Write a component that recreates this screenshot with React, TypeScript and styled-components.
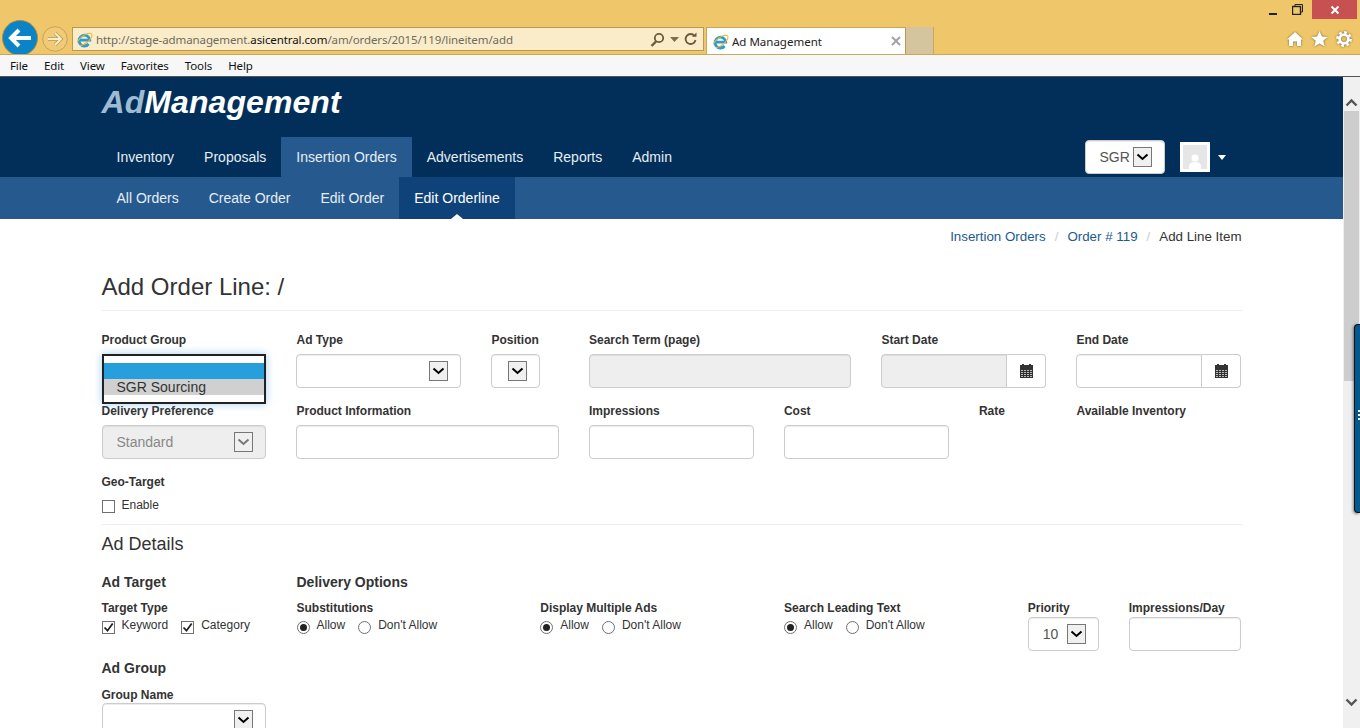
import React from "react";
import styled, { createGlobalStyle } from "styled-components";

const GlobalStyle = createGlobalStyle`
  html, body {
    margin: 0;
    height: 728px;
    overflow: hidden;
    background: #fff;
    font-family: "Liberation Sans", Arial, sans-serif;
    color: #333;
  }
  * { box-sizing: border-box; }
`;

/* ---------- browser chrome ---------- */

const Chrome = styled.div`
  height: 55px;
  background: #efc669;
  border-bottom: 1px solid #c9a85a;
  overflow: hidden;
`;

const TitleRow = styled.div`
  height: 27px;
  display: flex;
  justify-content: flex-end;
  align-items: flex-start;
  padding-right: 3px;
`;

const WindowButton = styled.div<{ $close?: boolean }>`
  width: ${(p) => (p.$close ? "45px" : "25px")};
  height: 19px;
  margin-left: ${(p) => (p.$close ? "2px" : "0")};
  display: flex;
  align-items: center;
  justify-content: center;
  background: ${(p) => (p.$close ? "#c75050" : "transparent")};
`;

const ToolRow = styled.div`
  height: 27px;
  display: flex;
  align-items: flex-start;
  padding-left: 2px;
`;

const RoundButton = styled.div`
  flex: none;
  width: 36px;
  height: 36px;
  margin-top: -7px;
`;

const ForwardButton = styled.div`
  flex: none;
  width: 26px;
  height: 26px;
  margin: -1px 0 0 4px;
`;

const AddressBar = styled.div`
  flex: none;
  width: 632px;
  height: 24px;
  margin-left: 4px;
  padding: 0 6px 0 3px;
  display: flex;
  align-items: center;
  background: #faecc9;
  border: 1px solid #b89a52;
`;

const AddressText = styled.div`
  flex: 1;
  margin-left: 3px;
  padding-top: 1px;
  font: 11.5px/22px "Noto Sans", sans-serif;
  letter-spacing: -0.1px;
  color: #6f6a5c;
  white-space: nowrap;
  strong {
    font-weight: 400;
    color: #111;
  }
`;

const AddressTools = styled.div`
  display: flex;
  align-items: center;
  gap: 5px;
`;

const BrowserTab = styled.div`
  flex: none;
  width: 200px;
  height: 27px;
  margin-left: 2px;
  padding: 0 4px 0 5px;
  display: flex;
  align-items: center;
  background: #fff;
  border: 1px solid #c9a85a;
  border-bottom: none;
  border-right-color: #b89a52;
`;

const TabTitle = styled.div`
  flex: 1;
  margin-left: 3px;
  padding-top: 1px;
  font: 11.5px/22px "Noto Sans", sans-serif;
  color: #222;
`;

const NewTab = styled.div`
  flex: none;
  width: 28px;
  height: 27px;
  background: #d5c59e;
  border-right: 1px solid #c9a85a;
`;

const ToolIcons = styled.div`
  margin-left: auto;
  padding: 4px 8px 0 0;
  display: flex;
  gap: 8px;
  filter: drop-shadow(0 0 1px #6e5f3a);
`;

const MenuBar = styled.div`
  height: 22px;
  padding-left: 10px;
  display: flex;
  align-items: center;
  gap: 16px;
  background: #f7f7f7;
  border-bottom: 1px solid #555;
  font: 11.5px/20px "Noto Sans", sans-serif;
  letter-spacing: -0.12px;
  color: #111;
`;

/* ---------- viewport + scrollbar ---------- */

const Viewport = styled.div`
  position: relative;
  height: 651px;
  display: flex;
  overflow: hidden;
`;

const Page = styled.main`
  flex: 1;
  min-width: 0;
  overflow: hidden;
`;

const Scrollbar = styled.div`
  flex: none;
  width: 17px;
  display: flex;
  flex-direction: column;
  align-items: center;
  background: #f0f0f0;
  padding: 16px 0 0;
`;

const ScrollArrow = styled.div`
  height: 18px;
  flex: none;
`;

const ScrollThumb = styled.div`
  width: 15px;
  height: 270px;
  flex: none;
  background: #cdcdcd;
`;

const ScrollDown = styled.div`
  margin-top: auto;
  margin-bottom: 17px;
`;

const SideHandle = styled.div`
  position: absolute;
  top: 247px;
  right: 0;
  width: 6px;
  height: 189px;
  display: flex;
  flex-direction: column;
  justify-content: center;
  align-items: flex-end;
  gap: 2px;
  padding-bottom: 8px;
  background: #005a8f;
  border: 1px solid #111;
  border-right: none;
  border-radius: 4px 0 0 4px;
  box-shadow: -1px 1px 3px rgba(0, 0, 0, 0.45);
  span {
    width: 2px;
    height: 2px;
    background: #fff;
  }
`;

/* ---------- site header ---------- */

const Header = styled.header`
  background: #012f5a;
`;

const Container = styled.div`
  width: 1170px;
  margin: 0 auto;
`;

const LogoRow = styled.div`
  height: 60px;
  padding: 5px 15px 0;
`;

const Logo = styled.div`
  font: italic 700 32px/40px "Liberation Sans", Arial, sans-serif;
  letter-spacing: 0.08px;
  color: #fff;
  span {
    color: #9dbcd3;
  }
`;

const MainNavRow = styled.div`
  display: flex;
  align-items: center;
  justify-content: space-between;
  padding: 0 31px 0 15px;
`;

const NavList = styled.nav`
  display: flex;
`;

const NavItem = styled.a<{ $active?: boolean }>`
  padding: 0 15px;
  font-size: 14px;
  line-height: 40px;
  color: #e6edf3;
  background: ${(p) => (p.$active ? "#265a8f" : "transparent")};
`;

const UserArea = styled.div`
  display: flex;
  align-items: center;
`;

const Avatar = styled.div`
  width: 30px;
  height: 30px;
  margin-left: 15px;
  background: #e6e6e6;
  border: 3px solid #fff;
`;

const Caret = styled.div`
  margin-left: 8px;
  width: 0;
  height: 0;
  border-left: 4.5px solid transparent;
  border-right: 4.5px solid transparent;
  border-top: 5px solid #fff;
`;

const SubNavBar = styled.div`
  background: #265a8f;
`;

const SubNavList = styled.nav`
  display: flex;
  padding-left: 15px;
`;

const SubNavItem = styled.a<{ $active?: boolean }>`
  position: relative;
  padding: 0 15px;
  font-size: 14px;
  line-height: 42px;
  color: ${(p) => (p.$active ? "#fff" : "#e6edf3")};
  background: ${(p) => (p.$active ? "#10427a" : "transparent")};
  ${(p) =>
    p.$active &&
    `&::after {
      content: "";
      position: absolute;
      left: 50%;
      bottom: 0;
      margin-left: -6px;
      border-left: 6px solid transparent;
      border-right: 6px solid transparent;
      border-bottom: 5px solid #fff;
    }`}
`;

/* ---------- page body ---------- */

const Breadcrumb = styled.div`
  height: 20px;
  margin-top: 8px;
  padding-right: 15px;
  display: flex;
  justify-content: flex-end;
  font-size: 13.33px;
  line-height: 20px;
  a {
    color: #1b5a8f;
  }
  i {
    font-style: normal;
    color: #ccc;
    padding: 0 9px;
  }
`;

const PageTitle = styled.h1`
  margin: 27px 15px 19px;
  padding-bottom: 10px;
  border-bottom: 1px solid #eee;
  font-size: 24px;
  font-weight: 400;
  line-height: 26px;
  color: #333;
`;

const FormRow = styled.div`
  width: 1169.9px;
  display: grid;
  grid-template-columns: repeat(12, 1fr);
`;

const Col = styled.div<{ $span: number; $flush?: boolean }>`
  grid-column: span ${(p) => p.$span};
  padding: 0 15px ${(p) => (p.$flush ? "0" : "13px")};
`;

const Label = styled.label<{ $tight?: boolean }>`
  display: block;
  margin-bottom: ${(p) => (p.$tight ? "1px" : "4px")};
  font-size: 12px;
  font-weight: 700;
  line-height: ${(p) => (p.$tight ? "16px" : "20px")};
  color: #333;
  white-space: nowrap;
`;

const TextInput = styled.input`
  display: block;
  width: 100%;
  height: 34px;
  padding: 0 12px;
  border: 1px solid #ccc;
  border-radius: 4px;
  background: #fff;
  box-shadow: inset 0 1px 1px rgba(0, 0, 0, 0.075);
  &:disabled {
    background: #eee;
  }
`;

const InputGroup = styled.div`
  display: flex;
  ${TextInput} {
    flex: 1;
    min-width: 0;
    border-radius: 4px 0 0 4px;
  }
`;

const Addon = styled.div`
  flex: none;
  width: 39px;
  height: 34px;
  display: flex;
  align-items: center;
  justify-content: center;
  border: 1px solid #ccc;
  border-left: none;
  border-radius: 0 4px 4px 0;
  background: #fff;
`;

const SelectBox = styled.div<{ $width?: number; $disabled?: boolean }>`
  position: relative;
  width: ${(p) => (p.$width ? `${p.$width}px` : "100%")};
  height: 34px;
  padding: 0 12px 0 14px;
  display: flex;
  align-items: center;
  justify-content: space-between;
  border: 1px solid #ccc;
  border-radius: 4px;
  background: ${(p) => (p.$disabled ? "#eee" : "#fff")};
  box-shadow: inset 0 1px 1px rgba(0, 0, 0, 0.075);
  font-size: 14px;
  color: ${(p) => (p.$disabled ? "#888" : "#555")};
`;

const ArrowBox = styled.span<{ $muted?: boolean }>`
  flex: none;
  width: 19px;
  height: 20px;
  margin-left: auto;
  display: flex;
  align-items: center;
  justify-content: center;
  background: #f0f0f0;
  border: 1px solid #777;
  color: ${(p) => (p.$muted ? "#777" : "#000")};
`;

const OpenList = styled.div`
  position: absolute;
  top: -1px;
  left: -1px;
  right: -1px;
  z-index: 2;
  padding: 7px 0;
  background: #fff;
  border: 2px solid #222;
  box-shadow: 0 0 8px rgba(102, 175, 233, 0.6);
`;

const OpenOption = styled.div<{ $selected?: boolean }>`
  height: 16px;
  padding-left: 13px;
  font-size: 14px;
  line-height: 16px;
  color: #333;
  background: ${(p) => (p.$selected ? "#269fdc" : "#d0d0d0")};
`;

const CheckRow = styled.div`
  display: flex;
  gap: 7px;
  font-size: 12px;
  line-height: 16px;
  color: #333;
`;

const EnableRow = styled(CheckRow)`
  line-height: 18px;
`;

const OptionRow = styled(CheckRow)`
  margin-top: 1px;
`;

const CheckItem = styled.span`
  display: flex;
  margin-right: 6px;
  gap: 7px;
`;

const BoxMark = styled.span`
  flex: none;
  width: 13px;
  height: 13px;
  margin-top: 4px;
  display: flex;
  align-items: center;
  justify-content: center;
  background: #fff;
  border: 1px solid #707070;
`;

const RadioMark = styled(BoxMark)`
  border-radius: 50%;
`;

const RadioDot = styled.span`
  width: 7px;
  height: 7px;
  border-radius: 50%;
  background: #222;
`;

const Divider = styled.hr`
  margin: 10px 15px 9px;
  border: none;
  border-top: 1px solid #eee;
`;

const SectionTitle = styled.h2`
  margin: 0 15px 18px;
  font-size: 18px;
  font-weight: 400;
  line-height: 20px;
  color: #333;
`;

const DetailsGrid = styled.div`
  display: grid;
  grid-template-columns: 195px 975px;
`;

const TargetCol = styled.div`
  padding: 0 15.5px 0 15px;
`;

const DeliveryCol = styled.div`
  padding: 0 15px;
`;

const DetailsHeading = styled.h3<{ $spaced?: boolean }>`
  margin: ${(p) => (p.$spaced ? "24px" : "0")} 0 8px;
  font-size: 14px;
  font-weight: 700;
  line-height: 20px;
  color: #333;
`;

const DeliveryGrid = styled.div`
  display: grid;
  grid-template-columns: 243.75px 243.75px 243.75px 101px 1fr;
  margin-right: -15px;
`;

const OptionGroup = styled.div``;

const GroupField = styled.div`
  margin-top: 9px;
  ${Label} {
    margin-bottom: 0;
  }
`;

const ImpressionsCol = styled.div`
  padding-right: 15.5px;
`;

/* ---------- drawings ---------- */

const IeIcon = () => (
  <svg width="17" height="17" viewBox="0 0 17 17">
    <path d="M3.6 9.2h10.2A5.4 5.4 0 1 0 12.6 13" fill="none" stroke="#2c9bd9" strokeWidth="2.8" />
    <ellipse cx="8.5" cy="8.5" rx="9" ry="3.8" transform="rotate(-38 8.5 8.5)" fill="none" stroke="#f0b428" strokeWidth="1" strokeDasharray="18 6 30" />
  </svg>
);

const Chevron = () => (
  <svg width="13" height="8" viewBox="0 0 13 8">
    <path d="M1.5 1.5l5 4.5 5-4.5" fill="none" stroke="currentColor" strokeWidth="2" />
  </svg>
);

const Arrow = ({ muted }: { muted?: boolean }) => (
  <ArrowBox $muted={muted}>
    <Chevron />
  </ArrowBox>
);

const CalendarIcon = () => (
  <svg width="13" height="14" viewBox="0 0 13 14">
    <rect x="0" y="1" width="13" height="13" fill="#333" />
    <rect x="2" y="0" width="2" height="2" fill="#333" />
    <rect x="9" y="0" width="2" height="2" fill="#333" />
    <path d="M1 6.5h11M1 8.5h11M1 10.5h11M1 12.5h11" stroke="#bbb" strokeWidth="1" strokeDasharray="2 1" />
  </svg>
);

const Check = ({ label, checked }: { label: string; checked?: boolean }) => (
  <CheckItem>
    <BoxMark>
      {checked && (
        <svg width="11" height="11" viewBox="0 0 11 11">
          <path d="M1.5 5.5l3 3.2L9.7 1.5" fill="none" stroke="#222" strokeWidth="1.8" />
        </svg>
      )}
    </BoxMark>
    {label}
  </CheckItem>
);

const Radio = ({ label, checked }: { label: string; checked?: boolean }) => (
  <CheckItem>
    <RadioMark>{checked && <RadioDot />}</RadioMark>
    {label}
  </CheckItem>
);

const AllowOptions = () => (
  <OptionRow>
    <Radio label="Allow" checked />
    <Radio label="Don't Allow" />
  </OptionRow>
);

const AvatarFigure = () => (
  <svg width="24" height="24" viewBox="0 0 24 24">
    <circle cx="12" cy="13" r="3.5" fill="#fff" />
    <path d="M6 24v-3c0-2.5 3-4 6-4s6 1.5 6 4v3z" fill="#fff" />
  </svg>
);

const navItems = ["Inventory", "Proposals", "Insertion Orders", "Advertisements", "Reports", "Admin"];
const subNavItems = ["All Orders", "Create Order", "Edit Order", "Edit Orderline"];
const menuItems = ["File", "Edit", "View", "Favorites", "Tools", "Help"];

export default function App() {
  return (
    <>
      <GlobalStyle />
      <Chrome>
        <TitleRow>
          <WindowButton>
            <svg width="10" height="10" viewBox="0 0 10 10">
              <rect x="1" y="8" width="8" height="2" fill="#222" />
            </svg>
          </WindowButton>
          <WindowButton>
            <svg width="11" height="11" viewBox="0 0 11 11" fill="none" stroke="#222">
              <rect x="0.5" y="2.5" width="8" height="8" strokeWidth="1.4" />
              <path d="M3 2V0.5h7.5V8H9" />
            </svg>
          </WindowButton>
          <WindowButton $close>
            <svg width="10" height="10" viewBox="0 0 10 10">
              <path d="M1.5 1.5l7 7M8.5 1.5l-7 7" stroke="#fff" strokeWidth="2" />
            </svg>
          </WindowButton>
        </TitleRow>
        <ToolRow>
          <RoundButton>
            <svg width="36" height="36" viewBox="0 0 36 36">
              <circle cx="18" cy="18" r="17.5" fill="#0a84c6" stroke="#a88a40" strokeWidth="1" />
              <path d="M29 18H10M17 10l-8 8 8 8" fill="none" stroke="#fff" strokeWidth="4" />
            </svg>
          </RoundButton>
          <ForwardButton>
            <svg width="26" height="26" viewBox="0 0 26 26">
              <circle cx="13" cy="13" r="12.3" fill="#f0ca75" stroke="#c4a458" strokeWidth="1" />
              <path d="M6 13h12M13 7l6 6-6 6" fill="none" stroke="#b99c58" strokeWidth="3.4" />
              <path d="M6 13h12M13 7l6 6-6 6" fill="none" stroke="#fbeec8" strokeWidth="1.8" />
            </svg>
          </ForwardButton>
          <AddressBar>
            <IeIcon />
            <AddressText>
              http://stage-admanagement.<strong>asicentral.com</strong>/am/orders/2015/119/lineitem/add
            </AddressText>
            <AddressTools>
              <svg width="15" height="15" viewBox="0 0 15 15" fill="none" stroke="#6b5b37">
                <circle cx="9" cy="6" r="4.2" strokeWidth="1.8" />
                <path d="M6 9.5L1.5 14" strokeWidth="2.4" />
              </svg>
              <svg width="9" height="5" viewBox="0 0 9 5">
                <path d="M0 0h9L4.5 5z" fill="#7d6e4a" />
              </svg>
              <svg width="13" height="14" viewBox="0 0 13 14" fill="none">
                <path d="M10.6 4A5 5 0 1 0 11.5 8" stroke="#6b5b37" strokeWidth="1.8" />
                <path d="M8 4.8h4.5V0.5z" fill="#6b5b37" />
              </svg>
            </AddressTools>
          </AddressBar>
          <BrowserTab>
            <IeIcon />
            <TabTitle>Ad Management</TabTitle>
            <svg width="10" height="10" viewBox="0 0 10 10">
              <path d="M1 1l8 8M9 1l-8 8" stroke="#a3a3a3" strokeWidth="2" />
            </svg>
          </BrowserTab>
          <NewTab />
          <ToolIcons>
            <svg width="16" height="16" viewBox="0 0 16 16">
              <path d="M8 1l8 7.5h-2V15h-4v-4.5H6V15H2V8.5H0z" fill="#fff" />
            </svg>
            <svg width="17" height="16" viewBox="0 0 17 16">
              <path d="M8.5 0l2.4 5.4 5.8.6-4.4 3.8 1.3 5.8-5.1-3-5.1 3 1.3-5.8L.3 6l5.8-.6z" fill="#fff" />
            </svg>
            <svg width="16" height="16" viewBox="0 0 16 16" fill="none" stroke="#fff">
              <circle cx="8" cy="8" r="4.4" strokeWidth="2.8" />
              <circle cx="8" cy="8" r="6.6" strokeWidth="2.6" strokeDasharray="2.6 2.58" />
            </svg>
          </ToolIcons>
        </ToolRow>
      </Chrome>
      <MenuBar>
        {menuItems.map((item) => (
          <span key={item}>{item}</span>
        ))}
      </MenuBar>

      <Viewport>
        <Page>
          <Header>
            <Container>
              <LogoRow>
                <Logo>
                  <span>Ad</span>Management
                </Logo>
              </LogoRow>
              <MainNavRow>
                <NavList>
                  {navItems.map((item) => (
                    <NavItem key={item} $active={item === "Insertion Orders"}>
                      {item}
                    </NavItem>
                  ))}
                </NavList>
                <UserArea>
                  <SelectBox $width={80}>
                    SGR
                    <Arrow />
                  </SelectBox>
                  <Avatar>
                    <AvatarFigure />
                  </Avatar>
                  <Caret />
                </UserArea>
              </MainNavRow>
            </Container>
          </Header>
          <SubNavBar>
            <Container>
              <SubNavList>
                {subNavItems.map((item) => (
                  <SubNavItem key={item} $active={item === "Edit Orderline"}>
                    {item}
                  </SubNavItem>
                ))}
              </SubNavList>
            </Container>
          </SubNavBar>

          <Container>
            <Breadcrumb>
              <a>Insertion Orders</a>
              <i>/</i>
              <a>Order # 119</a>
              <i>/</i>
              <span>Add Line Item</span>
            </Breadcrumb>
            <PageTitle>Add Order Line: /</PageTitle>

            <FormRow>
              <Col $span={2}>
                <Label>Product Group</Label>
                <SelectBox>
                  <OpenList>
                    <OpenOption $selected />
                    <OpenOption>SGR Sourcing</OpenOption>
                  </OpenList>
                </SelectBox>
              </Col>
              <Col $span={2}>
                <Label>Ad Type</Label>
                <SelectBox>
                  <Arrow />
                </SelectBox>
              </Col>
              <Col $span={1}>
                <Label>Position</Label>
                <SelectBox $width={49}>
                  <Arrow />
                </SelectBox>
              </Col>
              <Col $span={3}>
                <Label>Search Term (page)</Label>
                <TextInput disabled />
              </Col>
              <Col $span={2}>
                <Label>Start Date</Label>
                <InputGroup>
                  <TextInput disabled />
                  <Addon>
                    <CalendarIcon />
                  </Addon>
                </InputGroup>
              </Col>
              <Col $span={2}>
                <Label>End Date</Label>
                <InputGroup>
                  <TextInput />
                  <Addon>
                    <CalendarIcon />
                  </Addon>
                </InputGroup>
              </Col>

              <Col $span={2}>
                <Label>Delivery Preference</Label>
                <SelectBox $disabled>
                  Standard
                  <Arrow muted />
                </SelectBox>
              </Col>
              <Col $span={3}>
                <Label>Product Information</Label>
                <TextInput />
              </Col>
              <Col $span={2}>
                <Label>Impressions</Label>
                <TextInput />
              </Col>
              <Col $span={2}>
                <Label>Cost</Label>
                <TextInput />
              </Col>
              <Col $span={1}>
                <Label>Rate</Label>
              </Col>
              <Col $span={2}>
                <Label>Available Inventory</Label>
              </Col>

              <Col $span={12} $flush>
                <Label>Geo-Target</Label>
                <EnableRow>
                  <Check label="Enable" />
                </EnableRow>
              </Col>
            </FormRow>
            <Divider />

            <SectionTitle>Ad Details</SectionTitle>
            <DetailsGrid>
              <TargetCol>
                <DetailsHeading>Ad Target</DetailsHeading>
                <Label $tight>Target Type</Label>
                <OptionRow>
                  <Check label="Keyword" checked />
                  <Check label="Category" checked />
                </OptionRow>
                <DetailsHeading $spaced>Ad Group</DetailsHeading>
                <GroupField>
                  <Label $tight>Group Name</Label>
                  <SelectBox>
                    <Arrow />
                  </SelectBox>
                </GroupField>
              </TargetCol>
              <DeliveryCol>
                <DetailsHeading>Delivery Options</DetailsHeading>
                <DeliveryGrid>
                  <OptionGroup>
                    <Label $tight>Substitutions</Label>
                    <AllowOptions />
                  </OptionGroup>
                  <OptionGroup>
                    <Label $tight>Display Multiple Ads</Label>
                    <AllowOptions />
                  </OptionGroup>
                  <OptionGroup>
                    <Label $tight>Search Leading Text</Label>
                    <AllowOptions />
                  </OptionGroup>
                  <OptionGroup>
                    <Label $tight>Priority</Label>
                    <SelectBox $width={71}>
                      10
                      <Arrow />
                    </SelectBox>
                  </OptionGroup>
                  <ImpressionsCol>
                    <Label $tight>Impressions/Day</Label>
                    <TextInput />
                  </ImpressionsCol>
                </DeliveryGrid>
              </DeliveryCol>
            </DetailsGrid>
          </Container>
        </Page>

        <Scrollbar>
          <ScrollArrow>
            <svg width="13" height="9" viewBox="0 0 13 9">
              <path d="M1.5 7.5l5-5 5 5" fill="none" stroke="#555" strokeWidth="2.4" />
            </svg>
          </ScrollArrow>
          <ScrollThumb />
          <ScrollDown>
            <svg width="13" height="9" viewBox="0 0 13 9">
              <path d="M1.5 1.5l5 5 5-5" fill="none" stroke="#555" strokeWidth="2.4" />
            </svg>
          </ScrollDown>
        </Scrollbar>
        <SideHandle>
          <span />
          <span />
          <span />
        </SideHandle>
      </Viewport>
    </>
  );
}
